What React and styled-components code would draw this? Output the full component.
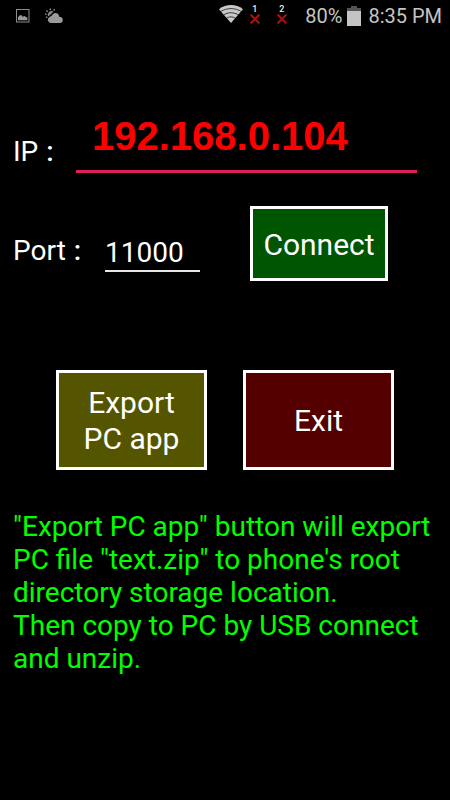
import React, { useState } from 'react';
import styled, { createGlobalStyle } from 'styled-components';

export default function App() {
  const [ip, setIp] = useState('192.168.0.104');
  const [port, setPort] = useState('11000');

  return (
    <Screen>
      <GlobalStyle />
      <StatusBar>
        <StatusGroup $gap="15px">
          <PictureIcon />
          <WeatherIcon />
        </StatusGroup>
        <StatusGroup $gap="5px">
          <SignalGroup>
            <WifiIcon />
            <NoSim number="1" />
            <NoSim number="2" />
          </SignalGroup>
          <span>80%</span>
          <BatteryIcon />
          <Clock>8:35 PM</Clock>
        </StatusGroup>
      </StatusBar>

      <Main>
        <IpField>
          <Label htmlFor="ip" $width="63px">IP<Colon>:</Colon></Label>
          <IpInput id="ip" value={ip} onChange={(e) => setIp(e.target.value)} />
        </IpField>

        <PortRow>
          <PortField>
            <Label htmlFor="port" $width="92px">Port<Colon>:</Colon></Label>
            <PortInput id="port" value={port} onChange={(e) => setPort(e.target.value)} />
          </PortField>
          <Button type="button" $color="#005500" $width="138px" $height="75px">Connect</Button>
        </PortRow>

        <ButtonRow>
          <Button type="button" $color="#555500" $width="151px" $height="100px">
            Export<br />PC app
          </Button>
          <Button type="button" $color="#550000" $width="151px" $height="100px">Exit</Button>
        </ButtonRow>

        <Help>
          "Export PC app" button will export PC file "text.zip" to phone's root directory storage location.
          <br />
          Then copy to PC by USB connect and unzip.
        </Help>
      </Main>
    </Screen>
  );
}

function PictureIcon() {
  return (
    <svg width="14" height="14" viewBox="0 0 14 14" aria-hidden="true">
      <rect x="0.5" y="0.5" width="12.5" height="12.5" fill="none" stroke="#8c8c8c" />
      <path d="M2 11.2V8.2L3.6 6.4L5.2 6L6.8 7.8L8.4 7L11.4 8.8V11.2Z" fill="#999" />
    </svg>
  );
}

function WeatherIcon() {
  return (
    <svg width="18" height="16" viewBox="0 0 18 16" aria-hidden="true">
      <path
        d="M5 0.6L5.6 2.2M9.6 1L8.8 2.6M1.4 2.6L2.8 3.6M0 6.2H1.6M1 9.6L2.4 8.8"
        stroke="#888"
        strokeWidth="1.4"
      />
      <path d="M2.8 7.6A3.8 3.8 0 0 1 8.6 3.6L3.4 8.6Z" fill="#888" />
      <path
        d="M5.6 15A3.2 3.2 0 0 1 3.8 9.6Q4.6 8 6.4 8Q7.6 5 10.4 5A4.2 4.2 0 0 1 14.2 8.8A3.2 3.2 0 0 1 17.8 12A3 3 0 0 1 14.8 15Z"
        fill="#999"
      />
      <path d="M3.6 9.4L9.8 3.8" stroke="#000" strokeWidth="1" />
    </svg>
  );
}

function WifiIcon() {
  return (
    <svg width="24" height="18" viewBox="0 0 24 18" aria-hidden="true">
      <path d="M12 18L0 4.2C7 -1.4 17 -1.4 24 4.2Z" fill="#c8c8c8" />
      <path
        d="M1.6 6.6C7.6 2.6 16.4 2.6 22.4 6.6M4.4 10C9 7 15 7 19.6 10M7.4 13.2C10.4 11.4 13.6 11.4 16.6 13.2"
        fill="none"
        stroke="#000"
        strokeWidth="0.7"
      />
    </svg>
  );
}

function NoSim({ number }) {
  return (
    <Sim>
      <SimNumber>{number}</SimNumber>
      <svg width="10" height="10" viewBox="0 0 10 10" aria-hidden="true">
        <path d="M0.6 0.6L9.4 9.4M9.4 0.6L0.6 9.4" stroke="#a81010" strokeWidth="2.2" />
      </svg>
    </Sim>
  );
}

function BatteryIcon() {
  return (
    <svg width="14" height="20" viewBox="0 0 14 20" aria-hidden="true">
      <path d="M0 2H4V0H10V2H14V5H0Z" fill="#555" />
      <rect y="5" width="14" height="15" fill="#c4c4c4" />
    </svg>
  );
}

const GlobalStyle = createGlobalStyle`
  * {
    box-sizing: border-box;
  }

  body {
    margin: 0;
    background: #000;
  }
`;

const Screen = styled.div`
  min-height: 100vh;
  background: #000;
  color: #fff;
  font-family: Roboto, sans-serif;
`;

const StatusBar = styled.header`
  display: flex;
  justify-content: space-between;
  align-items: center;
  height: 32px;
  padding: 0 8px 0 16px;
  color: #c4c4c4;
  font-size: 20px;
  line-height: 24px;
`;

const StatusGroup = styled.div`
  display: flex;
  align-items: center;
  gap: ${(props) => props.$gap};

  svg {
    display: block;
  }
`;

const SignalGroup = styled.div`
  display: flex;
  align-items: flex-start;
  gap: 6px;
  height: 22px;
  margin-right: 3px;
`;

const Sim = styled.div`
  display: flex;
  flex-direction: column;
  align-items: center;
  width: 21px;
  padding-right: 10px;
`;

const SimNumber = styled.span`
  color: #eee;
  font-size: 9px;
  font-weight: 500;
  line-height: 9px;
`;

const Clock = styled.time`
  margin-left: 2px;
`;

const Main = styled.main`
  padding: 74px 13px 24px;
`;

const IpField = styled.div`
  display: flex;
  align-items: flex-end;
  padding-right: 20px;
`;

const Label = styled.label`
  flex: none;
  width: ${(props) => props.$width};
  padding-bottom: 5px;
  font-size: 28px;
  line-height: 33px;
`;

const Colon = styled.span`
  margin-left: 8px;
  font-weight: 500;
`;

const Input = styled.input`
  min-width: 0;
  border: 0;
  border-radius: 0;
  outline: none;
  background: transparent;
`;

const IpInput = styled(Input)`
  flex: 1;
  height: 67px;
  padding: 0 16px 4px;
  border-bottom: 3px solid #e01e5f;
  color: #f00;
  font-family: 'Liberation Sans', Arial, sans-serif;
  font-size: 40px;
  font-weight: 700;
`;

const PortRow = styled.div`
  display: flex;
  align-items: flex-end;
  gap: 50px;
  margin-top: 33px;
`;

const PortField = styled.div`
  display: flex;
  align-items: flex-end;
  padding-bottom: 9px;
`;

const PortInput = styled(Input)`
  width: 95px;
  height: 36px;
  padding: 0 0 1px;
  border-bottom: 2px solid #e6e6e6;
  color: #fff;
  font-family: inherit;
  font-size: 28px;
`;

const Button = styled.button`
  width: ${(props) => props.$width};
  height: ${(props) => props.$height};
  padding: 2px 0 0;
  border: 3px solid #fff;
  border-radius: 0;
  background: ${(props) => props.$color};
  color: #fff;
  font-family: inherit;
  font-size: 30px;
  line-height: 36px;
  cursor: pointer;
`;

const ButtonRow = styled.div`
  display: flex;
  justify-content: center;
  gap: 36px;
  margin-top: 89px;
`;

const Help = styled.p`
  margin: 40px 0 0;
  color: #0f0;
  font-size: 28px;
  line-height: 33px;
`;
